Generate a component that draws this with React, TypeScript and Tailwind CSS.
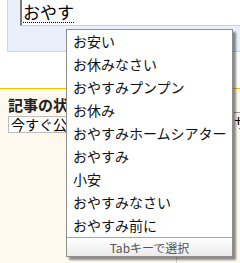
import React from "react";

const items = [
  "お安い",
  "お休みなさい",
  "おやすみプンプン",
  "お休み",
  "おやすみホームシアター",
  "おやすみ",
  "小安",
  "おやすみなさい",
  "おやすみ前に",
];

const jp = "font-['Noto_Sans_CJK_JP','Noto_Sans',sans-serif]";

const Suggestions = () => {
  return (
    <div className="absolute left-[66px] top-[29px] w-[167px] border border-[#8e8e8e] bg-white shadow-[3px_3px_2px_rgba(0,0,0,0.45)]">
      <ul className="flex flex-col">
        {items.map((item) => (
          <li
            key={item}
            className="h-[23px] pl-[6px] text-[14px] leading-[23px] text-[#111] whitespace-nowrap"
          >
            {item}
          </li>
        ))}
      </ul>
      <div className="h-[19px] border-t border-[#a5a5a5] bg-gradient-to-b from-white to-[#ebebeb] text-center text-[12px] leading-[19px] text-[#555]">
        Tabキーで選択
      </div>
    </div>
  );
};

const App = () => {
  return (
    <div className={`relative w-[240px] h-[263px] overflow-hidden bg-white ${jp}`}>
      <div className="flex h-[52px]">
        <div className="w-[7px] bg-white" />
        <div className="flex-1 border-l border-b border-[#cdd5e2] bg-[#e9f0fb] pl-[12px]">
          <div className="h-[26px] border-l-2 border-b border-l-[#7d7d7d] border-b-[#cfcfcf] bg-white pl-[1px]">
            <span className="text-[17px] leading-[22px] text-black underline decoration-dotted decoration-1 underline-offset-[3px]">
              おやす
            </span>
          </div>
        </div>
      </div>
      <div className="h-[36px]" />
      <div className="h-[175px] border-t border-[#f3c300] bg-[#fdf9ef] pl-[8px]">
        <div className="mt-[7px] text-[15px] font-bold leading-[18px] text-[#222]">
          記事の状態
        </div>
        <div className="mt-[2px] flex gap-[2px]">
          <div className="h-[17px] w-[224px] shrink-0 border border-[#bdbdbd] bg-white pl-[2px] text-[14px] leading-[15px] text-black">
            今すぐ公開
          </div>
          <div className="mt-[-4px] h-[21px] w-[40px] shrink-0 border-t border-[#9a9a9a] text-[14px] leading-[19px]">
            サ
          </div>
        </div>
        <div className="ml-[168px] mt-[110px] h-[20px] w-px bg-[#cfcfcf]" />
      </div>
      <Suggestions />
    </div>
  );
};

export default App;
